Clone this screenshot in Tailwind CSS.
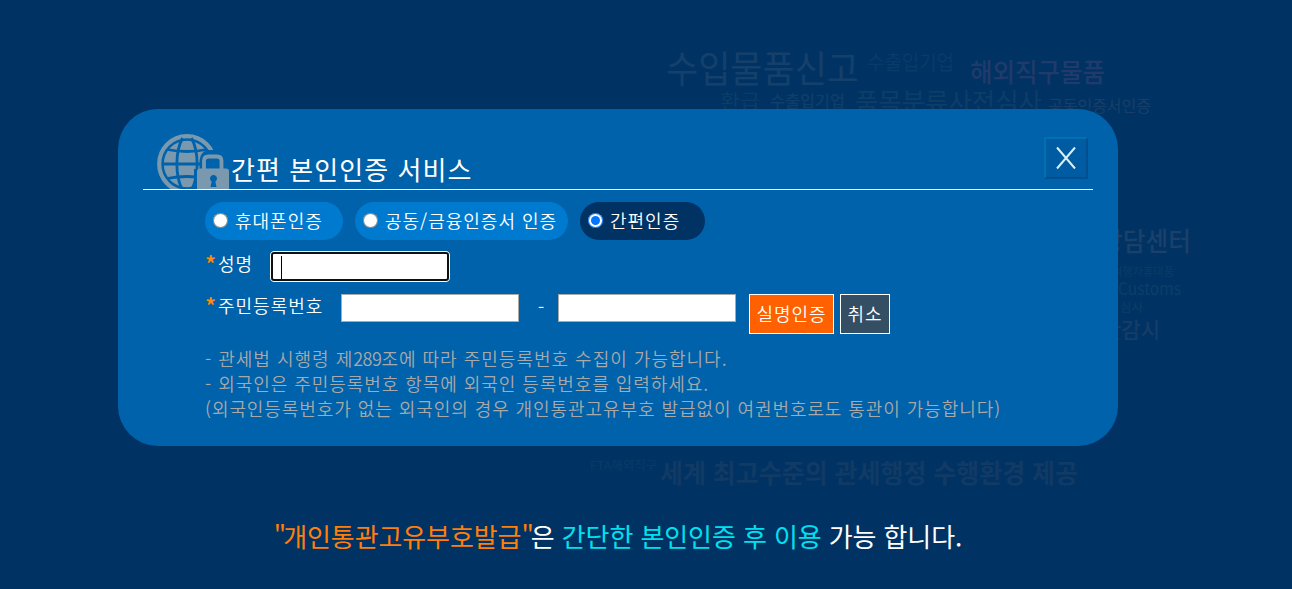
<!DOCTYPE html>
<html lang="ko">
<head>
<meta charset="UTF-8">
<meta name="viewport" content="width=device-width, initial-scale=1.0">
<title>간편 본인인증 서비스</title>
<script src="https://cdn.jsdelivr.net/npm/@tailwindcss/browser@4"></script>
</head>
<body class="relative h-screen overflow-hidden bg-[#003363] font-['Noto_Sans_CJK_KR',sans-serif] text-white">

<!-- Faded keyword cloud behind the dialog -->
<svg class="absolute inset-0" width="1292" height="589" viewBox="0 0 1292 589">
    <text x="666" y="83" font-size="37" textLength="193" lengthAdjust="spacingAndGlyphs" fill="#15406b">수입물품신고</text>
    <text x="867" y="70" font-size="20" textLength="87" lengthAdjust="spacingAndGlyphs" fill="#083c69">수출입기업</text>
    <text x="970" y="82" font-size="26" font-weight="500" textLength="135" lengthAdjust="spacingAndGlyphs" fill="#203b6b">해외직구물품</text>
    <text x="720" y="109" font-size="20" textLength="40" lengthAdjust="spacingAndGlyphs" fill="#0b3d69">환급</text>
    <text x="770" y="107" font-size="16" font-weight="500" textLength="75" lengthAdjust="spacingAndGlyphs" fill="#0e3f6a">수출입기업</text>
    <text x="855" y="111" font-size="25" textLength="187" lengthAdjust="spacingAndGlyphs" fill="#0c3e68">품목분류사전심사</text>
    <text x="1048" y="112" font-size="16" textLength="103" lengthAdjust="spacingAndGlyphs" fill="#183f6a">공동인증서인증</text>
    <text x="1100" y="251" font-size="26" font-weight="500" textLength="91" lengthAdjust="spacingAndGlyphs" fill="#1b406a">상담센터</text>
    <text x="1112" y="276" font-size="11" textLength="62" lengthAdjust="spacingAndGlyphs" fill="#0b3c66">여행자휴대품</text>
    <text x="1118" y="295" font-size="17" textLength="63" lengthAdjust="spacingAndGlyphs" fill="#0b3f68">Customs</text>
    <text x="1120" y="312" font-size="12" textLength="23" lengthAdjust="spacingAndGlyphs" fill="#0e3d69">심사</text>
    <text x="1102" y="338" font-size="22" font-weight="500" textLength="58" lengthAdjust="spacingAndGlyphs" fill="#163d67">산감시</text>
    <text x="590" y="470" font-size="12" textLength="67" lengthAdjust="spacingAndGlyphs" fill="#0a3b68">FTA해외직구</text>
    <text x="660" y="483" font-size="26" font-weight="700" textLength="418" lengthAdjust="spacingAndGlyphs" fill="#113a65">세계 최고수준의 관세행정 수행환경 제공</text>
</svg>

<main class="relative ml-[118px] w-[1000px] pt-[109px]">
    <section class="h-[337px] rounded-[40px] bg-[#0062aa] px-[25px] pt-6">
        <header class="flex h-[57px] items-end border-b border-white pl-3.5">
            <svg class="shrink-0" width="74" height="56" viewBox="0 0 74 56" fill="none">
                <!-- globe -->
                <circle cx="30" cy="31" r="27.8" stroke="#7a99ae" stroke-width="4.2"/>
                <circle cx="30" cy="31" r="23.2" fill="#7a99ae"/>
                <g stroke="#0062aa" stroke-width="2.8">
                    <path d="M5 31h50M10 16.500q20 4 40 0M10 45.500q20-4 40 0"/>
                    <path d="M25.500 5C18 19 18 43 25.500 57M34.500 5c7.500 14 7.500 38 0 52"/>
                </g>
                <!-- padlock -->
                <path d="M37 56V36h5.500v-6q0-13 11-13H74v39z" fill="#0062aa"/>
                <path d="M47 38v-10q0-4.500 4.500-4.500h8.500q4.500 0 4.500 4.500V38" stroke="#7a99ae" stroke-width="3.8"/>
                <path d="M40 56V38.500q0-3 3-3h26q3 0 3 3V56z" fill="#7a99ae"/>
                <path d="M53.500 54l1.200-5.500a3.500 3.500 0 1 1 3.600 0l1.200 5.500z" fill="#0062aa"/>
            </svg>
            <h1 class="text-[26px]/[40px] tracking-[1.05px] whitespace-nowrap">간편 본인인증 서비스</h1>
            <button class="mr-[5px] mb-2.5 ml-auto grid h-[42px] w-11 place-items-center border-2 border-t-[#0070b0] border-r-[#00508f] border-b-[#00508f] border-l-[#0070b0] bg-[#005ca2]" aria-label="닫기">
                <svg width="20" height="24" viewBox="0 0 20 24" fill="none" stroke="#d8f0f7" stroke-width="2">
                    <path d="M1 1.500l18 21M19 1.500L1 22.500"/>
                </svg>
            </button>
        </header>

        <form class="pt-3 pl-[62px] text-[18px]/[36px] font-[350] tracking-[1px] whitespace-nowrap">
            <div class="flex gap-3">
                <label class="flex h-[38px] w-[138px] items-center rounded-full bg-[#007acf] pb-0.5 pl-2"><input type="radio" name="auth" class="mr-[7px] size-[15px]">휴대폰인증</label>
                <label class="flex h-[38px] w-[213px] items-center rounded-full bg-[#007acf] pb-0.5 pl-2"><input type="radio" name="auth" class="mr-[7px] size-[15px]">공동/금융인증서 인증</label>
                <label class="flex h-[38px] w-[125px] items-center rounded-full bg-[#003363] pb-0.5 pl-2"><input type="radio" name="auth" class="mr-[7px] size-[15px]" checked>간편인증</label>
            </div>

            <div class="mt-[11px] flex h-[31px]">
                <span class="w-[13px] text-[23px]/[25px] font-medium text-[#ff8a10]">*</span>
                <span class="w-[52px] leading-6">성명</span>
                <!-- focused field with its caret -->
                <div class="h-[31px] w-[180px] rounded-[4px] border border-white bg-white">
                    <div class="h-full rounded-[3px] border-2 border-[#101010] py-0.5 pl-2"><div class="h-[23px] w-px bg-black"></div></div>
                </div>
            </div>

            <div class="mt-3 flex h-10">
                <span class="w-[13px] text-[23px]/[23px] font-medium text-[#ff8a10]">*</span>
                <span class="w-[123px] leading-[22px]">주민등록번호</span>
                <input type="text" class="h-7 w-[178px] border border-[#a9a9a9] bg-white">
                <span class="w-[39px] pl-[19px] leading-6">-</span>
                <input type="text" class="h-7 w-[178px] border border-[#a9a9a9] bg-white">
                <button type="button" class="ml-[13px] h-10 w-[85px] border border-white bg-[#ff6000] pb-0.5 text-[18px]/[36px] tracking-[1px]">실명인증</button>
                <button type="button" class="ml-1.5 h-10 w-[50px] border border-white bg-[#344e64] pb-0.5 text-[18px]/[36px] tracking-[1px]">취소</button>
            </div>

            <div class="mt-3 text-[18px]/[25px] text-[#a9a9a9]">
                <p>- 관세법 시행령 제<span class="tracking-[-0.5px]">289</span>조에 따라 주민등록번호 수집이 가능합니다.</p>
                <p class="tracking-[0.95px]">- 외국인은 주민등록번호 항목에 외국인 등록번호를 입력하세요.</p>
                <p class="tracking-[0.93px]">(외국인등록번호가 없는 외국인의 경우 개인통관고유부호 발급없이 여권번호로도 통관이 가능합니다)</p>
            </div>
        </form>
    </section>

    <p class="mt-[71px] text-center text-[26px]/[38px] tracking-[-0.1px] whitespace-nowrap"><span class="text-[#ff7f0a]"><span class="tracking-[-3px]">"</span>개인통관고유부호발급<span class="tracking-[-3px]">"</span></span>은 <span class="text-[#00e1ef]">간단한 본인인증 후 이용</span> 가능 합니다.</p>
</main>
</body>
</html>
